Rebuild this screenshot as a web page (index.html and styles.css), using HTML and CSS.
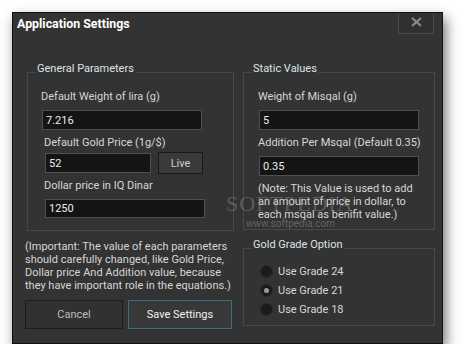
FILE: index.html
```html
<!DOCTYPE html>
<html lang="en">
<head>
    <meta charset="UTF-8">
    <title>Application Settings</title>
    <link rel="stylesheet" href="styles.css">
</head>
<body>
<div class="window">
    <div class="titlebar">
        <span class="title">Application Settings</span>
        <button class="close">
            <svg width="11" height="10" viewBox="0 0 11 10"><path d="M1 1 L10 9 M10 1 L1 9" stroke="#8a8a8a" stroke-width="2.2"/></svg>
        </button>
    </div>
    <div class="content">
        <div class="col left">
            <fieldset class="group general">
                <legend>General Parameters</legend>
                <label class="lbl">Default Weight of lira (g)</label>
                <input class="field wide" type="text" value="7.216">
                <label class="lbl shift">Default Gold Price (1g/$)</label>
                <div class="row shift">
                    <input class="field short" type="text" value="52">
                    <button class="live">Live</button>
                </div>
                <label class="lbl shift">Dollar price in IQ Dinar</label>
                <input class="field wide shift last" type="text" value="1250">
            </fieldset>
            <p class="important">(Important: The value of each parameters<br>should carefully changed, like Gold Price,<br>Dollar price And Addition value, because<br>they have important role in the equations.)</p>
            <div class="buttons">
                <button class="btn cancel">Cancel</button>
                <button class="btn save">Save Settings</button>
            </div>
        </div>
        <div class="col right">
            <fieldset class="group static">
                <legend>Static Values</legend>
                <label class="lbl">Weight of Misqal (g)</label>
                <input class="field wide" type="text" value="5">
                <label class="lbl">Addition Per Msqal (Default 0.35)</label>
                <input class="field wide" type="text" value="0.35">
                <p class="note">(Note: This Value is used to add<br>an amount of price in dollar, to<br>each msqal as benifit value.)</p>
            </fieldset>
            <fieldset class="group grade">
                <legend>Gold Grade Option</legend>
                <div class="radio"><span class="dot"></span>Use Grade 24</div>
                <div class="radio"><span class="dot checked"></span>Use Grade 21</div>
                <div class="radio"><span class="dot"></span>Use Grade 18</div>
            </fieldset>
        </div>
    </div>
    <div class="watermark">SOFTPEDIA</div>
    <div class="watermark-url">www.softpedia.com</div>
</div>
</body>
</html>
```

FILE: styles.css
```css
*{
    margin: 0;
    padding: 0;
    box-sizing: border-box;
}
body{
    background: #fff;
    font-family: Roboto, "Liberation Sans", sans-serif;
    font-size: 11px;
    color: #d6d6d6;
}
.window{
    position: relative;
    margin: 12px 0 0 12px;
    width: 431px;
    height: 332px;
    background: #333333;
    border: 1px solid #101010;
    box-shadow: 3px 6px 12px rgba(0,0,0,0.55);
}
.titlebar{
    display: flex;
    justify-content: space-between;
    align-items: flex-start;
    height: 49px;
    padding: 0 8px 0 4px;
}
.title{
    margin-top: 3px;
    font-size: 12.4px;
    line-height: 16px;
    font-weight: bold;
    color: #fff;
}
.close{
    width: 36px;
    height: 21px;
    background: #303030;
    border: 1px solid #4a4a4a;
    border-top: none;
    display: flex;
    align-items: center;
    justify-content: center;
    padding-bottom: 2px;
}
.content{
    display: flex;
    gap: 9px;
    padding-left: 12px;
}
.col{
    display: flex;
    flex-direction: column;
}
.group{
    border: 1px solid #484848;
}
.group legend{
    line-height: 14px;
    padding: 0 1px 6px;
    color: #dde3ea;
}
.general{
    margin-left: 2px;
    width: 207px;
    padding: 8px 0 12px 13px;
}
.general legend{
    margin-left: -5px;
}
.lbl{
    display: block;
    line-height: 14px;
}
.field{
    display: block;
    height: 20px;
    background: #141414;
    border: 1px solid #505050;
    color: #ececec;
    font-family: Roboto, "Liberation Sans", sans-serif;
    font-size: 11px;
    padding-left: 3px;
    outline: none;
}
.wide{
    width: 160px;
    margin: 6px 0 6px 1px;
}
.shift{
    margin-left: 3px;
}
.row{
    display: flex;
    gap: 7px;
    margin: 2px 0 5px 4px;
}
.short{
    width: 106px;
    margin-top: 1px;
}
.live{
    width: 45px;
    height: 22px;
    background: #3a3a3a;
    border: 1px solid #1a1a1a;
    color: #cfcfcf;
    font-family: Roboto, "Liberation Sans", sans-serif;
    font-size: 11px;
}
.general .wide.shift{
    margin-left: 4px;
    height: 19px;
}
.last{
    margin-bottom: 0 !important;
}
.important{
    margin-top: 9px;
    line-height: 13px;
    color: #d6d6d6;
}
.buttons{
    display: flex;
    gap: 5px;
    margin-top: 8px;
}
.btn{
    height: 29px;
    font-family: Roboto, "Liberation Sans", sans-serif;
    font-size: 11px;
}
.cancel{
    width: 98px;
    background: #313131;
    border: 1px solid #1c1c1c;
    color: #bdbdbd;
}
.save{
    width: 104px;
    background: #383838;
    border: 1px solid #3d6f80;
    color: #f2f2f2;
}
.static{
    width: 192px;
    padding: 8px 0 8px 14px;
}
.static legend{
    margin-left: -6px;
}
.note{
    line-height: 13px;
    color: #d6d6d6;
}
.grade{
    margin-top: 8px;
    width: 192px;
    padding: 4px 0 6px 16px;
}
.grade legend{
    margin-left: -8px;
}
.radio{
    display: flex;
    align-items: center;
    gap: 5px;
    height: 19px;
}
.dot{
    width: 13px;
    height: 13px;
    border-radius: 50%;
    background: #1b1b1b;
    border: 1px solid #2a2a2a;
    display: flex;
    align-items: center;
    justify-content: center;
}
.dot.checked::after{
    content: "";
    width: 5px;
    height: 5px;
    border-radius: 50%;
    background: #9a9a9a;
}
.watermark{
    position: absolute;
    left: 213px;
    top: 178px;
    font-family: "Liberation Serif", serif;
    font-size: 22px;
    letter-spacing: 1px;
    color: rgba(170,170,170,0.35);
}
.watermark-url{
    position: absolute;
    left: 233px;
    top: 205px;
    font-size: 10px;
    color: rgba(150,150,150,0.5);
}
```
